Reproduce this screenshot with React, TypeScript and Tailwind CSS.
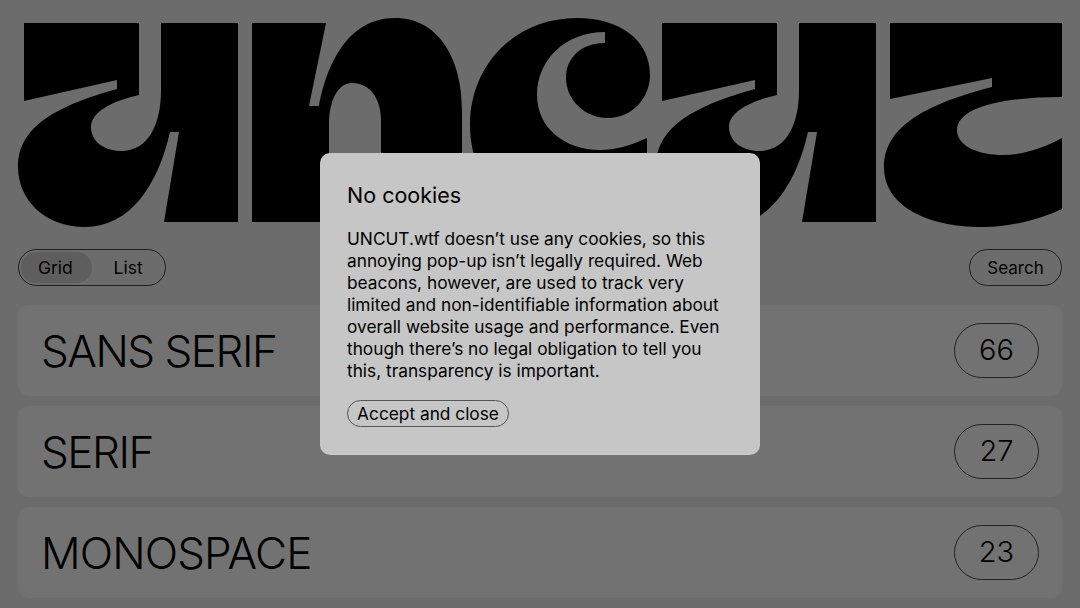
const UShape =
  "M24 23H139V95C112 101 91 112 91 127C91 142 105 151 121 151C148 151 161 125 161 90V23H238V222H164L179 132H170C158 185 130 227 85 227C45 227 18 200 18 167C18 125 60 105 117 89V80L24 101Z";

const categories = [
  { name: "SANS SERIF", count: 66, tracking: "tracking-[-1.5px]" },
  { name: "SERIF", count: 27, tracking: "tracking-[-1.5px]" },
  { name: "MONOSPACE", count: 23, tracking: "tracking-[-0.9px]" },
];

const Logo = () => (
  <svg
    className="block h-[240px] w-[1080px] shrink-0"
    viewBox="0 0 1080 240"
    role="img"
    aria-label="UNCUT"
  >
    <path d={UShape} />
    <path d="M252 23H326L309 106H319C326 68 346 18 395 18C438 18 462 58 462 110V222H381V120C381 100 371 83 352 83C338 83 329 100 329 125V222H252Z" />
    <path d="M605 43C581 43 566 58 566 78C566 100 585 118 608 118C632 118 650 98 650 75C650 40 620 18 577 18C515 18 470 65 470 125C470 185 515 227 577 227C605 227 630 220 647 210V138C630 146 615 150 600 150C565 150 537 128 537 95C537 60 565 32 605 32Z" />
    <path d={UShape} transform="translate(638 0)" />
    <path d="M890 23H1062V97C1000 97 957 108 957 130C957 147 980 155 1003 155C1025 155 1045 147 1062 138V209C1040 219 1012 227 983 227C925 227 884 205 884 167C884 125 930 103 992 87V78L890 99Z" />
  </svg>
);

const App = () => {
  return (
    <div className="relative h-[608px] w-[1080px] overflow-hidden bg-[#d8d8d8] font-['Inter',sans-serif] text-black">
      <Logo />

      <div className="flex items-center justify-between px-[18px] pt-[9px]">
        <div className="flex h-[37px] w-[147.5px] items-center rounded-full border border-black/70 p-[2px] text-[17.5px]">
          <span className="flex h-[31px] w-[72px] items-center justify-center rounded-full bg-[#bcbcbc] pr-[2px] pt-[2px]">
            Grid
          </span>
          <span className="flex h-[31px] w-[72px] items-center justify-center pl-[2px] pt-[2px]">
            List
          </span>
        </div>
        <button className="h-[37px] w-[93px] rounded-full border border-black/70 pt-[2px] text-[17px]">
          Search
        </button>
      </div>

      <div className="flex flex-col gap-[10px] px-[18px] pt-[19px]">
        {categories.map((category) => (
          <div
            key={category.name}
            className="flex h-[91px] items-center justify-between rounded-[10px] bg-[#e4e4e4] pl-[23px] pr-[23px]"
          >
            <span className={`text-[44px] font-[350] ${category.tracking}`}>
              {category.name}
            </span>
            <span className="flex h-[55px] w-[85px] items-center justify-center rounded-full border border-black/70 pb-[2px] text-[29px] font-[350]">
              {category.count}
            </span>
          </div>
        ))}
      </div>

      <div className="absolute inset-0 flex items-center justify-center bg-black/50">
        <div className="h-[302px] w-[440px] rounded-[10px] bg-[#c6c6c6] pl-[27px] pr-[28px] pt-[28px]">
          <h2 className="text-[21.5px] leading-[28px]">No cookies</h2>
          <p className="mt-[19px] text-[17.3px] leading-[22px]">
            UNCUT.wtf doesn’t use any cookies, so this annoying pop-up isn’t
            legally required. Web beacons, however, are used to track very
            limited and non-identifiable information about overall website usage
            and performance. Even though there’s no legal obligation to tell you
            this, transparency is important.
          </p>
          <button className="mt-[18px] flex h-[27px] w-[162px] items-center justify-center rounded-full border border-[#555] text-[17.3px]">
            Accept and close
          </button>
        </div>
      </div>
    </div>
  );
};

export default App;
